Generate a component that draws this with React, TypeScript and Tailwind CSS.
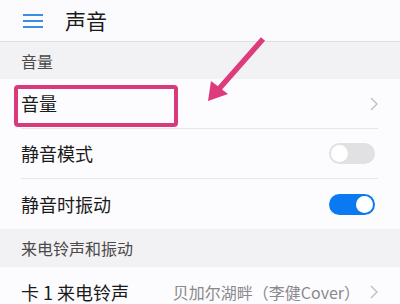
import React from "react";

const font = { fontFamily: '"Noto Sans CJK SC", "Noto Sans", sans-serif' };

function Chevron() {
  return (
    <svg width="8" height="14" viewBox="0 0 8 14" fill="none" className="shrink-0">
      <path d="M1 1l6 6-6 6" stroke="#bdbcc0" strokeWidth="1.3" />
    </svg>
  );
}

function Toggle({ on }: { on: boolean }) {
  return (
    <div
      className={`mr-[3px] flex h-[21px] w-[46px] items-center rounded-full px-[2px] ${
        on ? "justify-end bg-[#0a7af3]" : "justify-start bg-[#e1e0e3]"
      }`}
    >
      <div className="h-[17px] w-[17px] rounded-full bg-white" />
    </div>
  );
}

function SectionHeader({ title, h }: { title: string; h: string }) {
  return (
    <div className={`flex items-center bg-[#f2f1f4] pl-[21px] text-[16px] text-[#4a4a4a] ${h}`}>
      {title}
    </div>
  );
}

function Row({
  label,
  right,
  divider,
}: {
  label: string;
  right: React.ReactNode;
  divider?: boolean;
}) {
  return (
    <div className="pl-[21px] pr-[22px]">
      <div
        className={`flex h-[50px] items-center justify-between ${
          divider ? "border-b border-[#e6e5e8]" : ""
        }`}
      >
        <span className="text-[18px] text-[#1a1a1a]">{label}</span>
        {right}
      </div>
    </div>
  );
}

export default function App() {
  return (
    <div className="relative h-[304px] w-[400px] overflow-hidden bg-[#fcfbfd]" style={font}>
      <header className="flex h-[42px] items-center border-b border-[#dedde0] bg-[#fbfafc]">
        <div className="ml-[23px] flex w-[20px] flex-col gap-[4px]">
          <span className="h-[2px] bg-[#3a8ee2]" />
          <span className="h-[2px] bg-[#3a8ee2]" />
          <span className="h-[2px] bg-[#3a8ee2]" />
        </div>
        <h1 className="ml-[22px] text-[21px] leading-none text-[#1a1a1a]">声音</h1>
      </header>

      <SectionHeader title="音量" h="h-[37px]" />
      <div className="relative">
        <Row label="音量" right={<Chevron />} divider />
        <div className="absolute left-[14px] top-[6px] h-[42px] w-[164px] rounded-[4px] border-[4px] border-[#d93a7b]" />
      </div>
      <Row label="静音模式" right={<Toggle on={false} />} divider />
      <Row label="静音时振动" right={<Toggle on={true} />} />

      <SectionHeader title="来电铃声和振动" h="h-[38px]" />
      <div className="pl-[21px] pr-[22px]">
        <div className="flex h-[50px] items-center justify-between">
          <span className="text-[18px] text-[#1a1a1a]">卡 1 来电铃声</span>
          <div className="flex items-center gap-[10px]">
            <span className="text-[16px] text-[#8a898c]">贝加尔湖畔（李健Cover）</span>
            <Chevron />
          </div>
        </div>
      </div>

      <svg
        className="pointer-events-none absolute left-0 top-0"
        width="400"
        height="304"
        viewBox="0 0 400 304"
      >
        <line x1="263" y1="39" x2="218" y2="90" stroke="#dd3b7b" strokeWidth="5.5" strokeLinecap="butt" />
        <polygon points="208,101 211,81 228,94" fill="#dd3b7b" />
      </svg>
    </div>
  );
}
